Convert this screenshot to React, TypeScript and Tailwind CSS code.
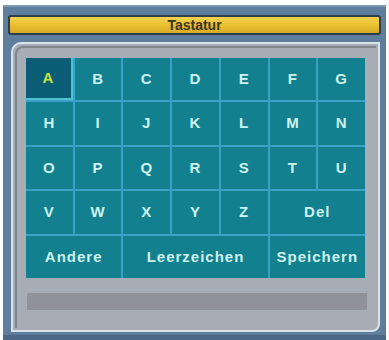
import React from "react";

const rows = [
  ["A", "B", "C", "D", "E", "F", "G"],
  ["H", "I", "J", "K", "L", "M", "N"],
  ["O", "P", "Q", "R", "S", "T", "U"],
];

const font = { fontFamily: '"Liberation Sans", Arial, sans-serif' };

function Key({
  label,
  active,
  span,
}: {
  label: string;
  active?: boolean;
  span?: string;
}) {
  return (
    <div
      className={`flex items-center justify-center text-[15px] font-bold tracking-[1px] ${span ?? ""} ${
        active
          ? "bg-[#0b5d76] text-[#c6e43a] border-r-2 border-b-2 border-[#4cc0d8]"
          : "bg-[#13808f] text-[#cdf3ef]"
      }`}
    >
      {label}
    </div>
  );
}

export default function App() {
  return (
    <div className="w-[389px] h-[340px] bg-white pt-[5px] px-[3px]" style={font}>
      <div className="h-[335px] bg-[#5f7e9d] flex flex-col border-t-2 border-[#7d9ab6]">
        {/* Title */}
        <div className="mx-[5px] mt-[8px] h-[20px] rounded-[3px] border-2 border-[#2e3d4c] bg-gradient-to-b from-[#f4d451] via-[#e9bf2f] to-[#d7aa26] flex items-center justify-center">
          <span className="text-[14px] font-bold text-[#3b351c] leading-none">Tastatur</span>
        </div>

        {/* Panel */}
        <div className="mt-[7px] ml-[8px] mr-[6px] h-[290px] rounded-tl-[10px] rounded-br-[8px] border-2 border-[#d9e3ea] bg-[#a7adb5] p-[2px]">
          <div className="h-full rounded-tl-[8px] border-l-2 border-t-2 border-[#7e8790] pt-[10px] pl-[9px] pr-[11px] flex flex-col">
            <div className="grid grid-cols-7 grid-rows-5 gap-[2px] bg-[#3aa2c6] w-[339px] h-[220px] p-0">
              {rows.flat().map((k, i) => (
                <Key key={k} label={k} active={i === 0} />
              ))}
              <Key label="V" />
              <Key label="W" />
              <Key label="X" />
              <Key label="Y" />
              <Key label="Z" />
              <Key label="Del" span="col-span-2" />
              <Key label="Andere" span="col-span-2" />
              <Key label="Leerzeichen" span="col-span-3" />
              <Key label="Speichern" span="col-span-2" />
            </div>
            <div className="mt-[15px] ml-[1px] w-[340px] h-[17px] bg-[#8f9298]" />
          </div>
        </div>

        <div className="mt-auto h-[5px] bg-[#4a6787]" />
      </div>
    </div>
  );
}
